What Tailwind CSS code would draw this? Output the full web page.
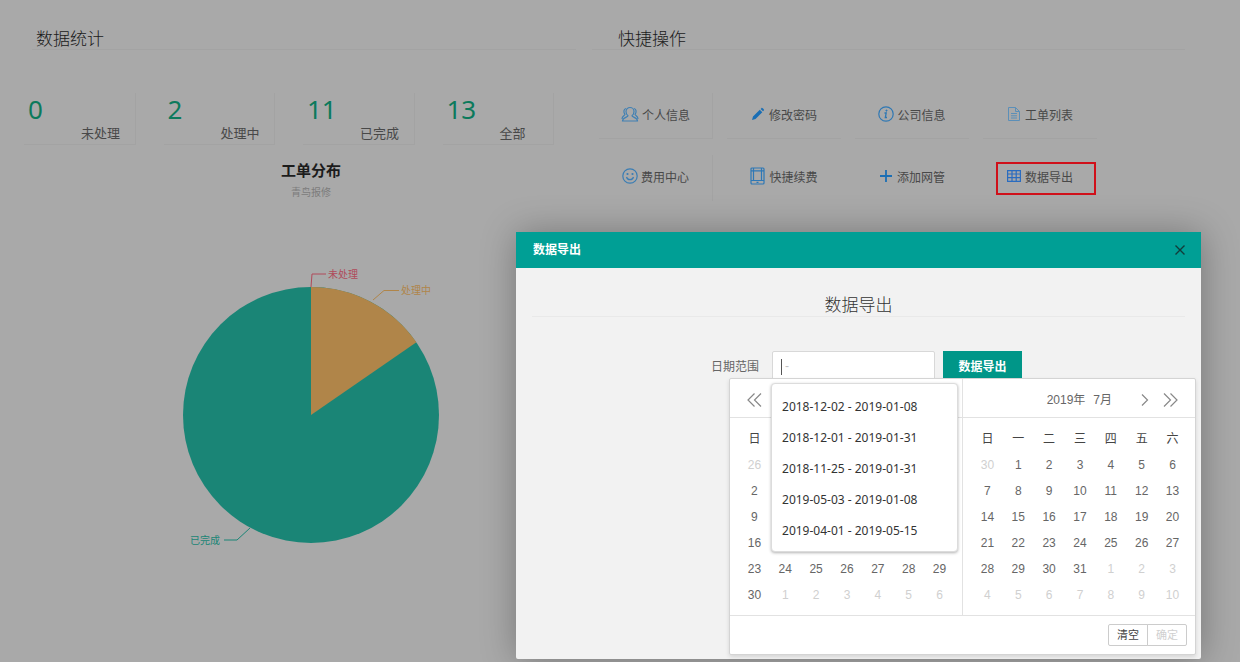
<!DOCTYPE html>
<html lang="zh-CN">
<head>
<meta charset="utf-8">
<meta name="viewport" content="width=device-width, initial-scale=1">
<title>数据导出</title>
<script src="https://cdn.jsdelivr.net/npm/@tailwindcss/browser@4"></script>
</head>
<body class="relative h-screen overflow-hidden bg-[#a9a9a9] font-['Liberation_Sans','Noto_Sans_CJK_SC',sans-serif] text-xs text-[#484848]">

<main class="grid grid-cols-[592fr_648fr]">
  <section>
    <div class="ml-8 mr-4 border-b border-[#a3a3a3] pt-[30px] pl-1">
      <h2 class="text-[17px] leading-[19px] font-light text-[#1a1a1a]">数据统计</h2>
    </div>
    <div class="mt-[43px] mr-[10px] ml-6 grid grid-cols-4">
      <div class="mr-7 h-[52px] border-r border-b border-[#a3a3a3] pl-1">
        <p class="font-['Noto_Sans'] text-[26px] leading-8 text-[#0c7a5c]">0</p>
        <p class="pl-[53px] text-[13px] leading-[18px]">未处理</p>
      </div>
      <div class="mr-7 h-[52px] border-r border-b border-[#a3a3a3] pl-1">
        <p class="font-['Noto_Sans'] text-[26px] leading-8 text-[#0c7a5c]">2</p>
        <p class="pl-[53px] text-[13px] leading-[18px]">处理中</p>
      </div>
      <div class="mr-7 h-[52px] border-r border-b border-[#a3a3a3] pl-1">
        <p class="font-['Noto_Sans'] text-[26px] leading-8 text-[#0c7a5c]">11</p>
        <p class="pl-[53px] text-[13px] leading-[18px]">已完成</p>
      </div>
      <div class="mr-7 h-[52px] border-r border-b border-[#a3a3a3] pl-1">
        <p class="font-['Noto_Sans'] text-[26px] leading-8 text-[#0c7a5c]">13</p>
        <p class="pl-[53px] text-[13px] leading-[18px]">全部</p>
      </div>
    </div>
    <div class="ml-[30px] mt-4 text-center">
      <h3 class="text-[15px] leading-5 font-bold text-[#1c1c1c]">工单分布</h3>
      <p class="mt-1 text-[10px] leading-4 text-[#7c7c7c]">青鸟报修</p>
      <svg class="mx-auto mt-[54px] block" width="282" height="300" viewBox="170 255 282 300" role="img" aria-label="工单分布饼图">
        <circle cx="311" cy="415" r="128" fill="#1a8576"/>
        <path d="M311 415V287A128 128 0 0 1 416.400 342.300Z" fill="#b08549"/>
        <g fill="none" stroke-width="1">
          <path d="M311 287L312 274H326" stroke="#b04a5a"/>
          <path d="M373 300L384 290.500H399" stroke="#b08549"/>
          <path d="M250 528L237 540H224" stroke="#1a8576"/>
        </g>
        <g font-size="10">
          <text x="328" y="278" fill="#b04a5a">未处理</text>
          <text x="401" y="294" fill="#b08549">处理中</text>
          <text x="190" y="544" fill="#1a8576">已完成</text>
        </g>
      </svg>
    </div>
  </section>

  <section>
    <div class="mr-[55px] border-b border-[#a3a3a3] pt-[30px] pl-[26px]">
      <h2 class="text-[17px] leading-[19px] font-light text-[#1a1a1a]">快捷操作</h2>
    </div>
    <nav class="mt-[43px] mr-[136px] grid grid-cols-4 gap-y-4">
      <a href="#" class="mx-[7px] flex h-[46px] items-center justify-center gap-[3px] border-r border-b border-[#a3a3a3]">
        <svg class="mb-1 size-[18px]" viewBox="0 0 18 18" fill="none" stroke="#4080b4" stroke-width="1.200"><path d="M5 6.500a4 4 0 1 1 8 0c0 2-1 3.500-2 4.300 0 1.400 5.500 1.600 5.500 5.200h-15C1.500 12.400 7 12.200 7 10.800 6 10 5 8.500 5 6.500Z"/><path d="M5 3.500C2.500 4 2.300 7.500 4 9.300 4 10.500 1 10.800 1 14M13 3.500c2.500.5 2.700 4 1 5.800 0 1.200 3 1.500 3 4.700"/></svg><span>个人信息</span></a>
      <a href="#" class="mx-[7px] flex h-[46px] items-center justify-center gap-1 border-b border-[#a3a3a3]">
        <svg class="mb-1 size-[14px]" viewBox="0 0 14 14" fill="#1a6eb4"><path d="M1 13l1-3.500 6.800-6.800 2.500 2.500L4.500 12ZM9.600 1.900l1-1c.5-.5 2.900 1.800 2.400 2.400l-1 1Z"/></svg><span>修改密码</span></a>
      <a href="#" class="mx-[7px] flex h-[46px] items-center justify-center gap-[3px] border-b border-[#a3a3a3]">
        <svg class="mb-1 size-4" viewBox="0 0 16 16" fill="none" stroke="#2f78b4"><circle cx="8" cy="8" r="7.200" stroke-width="1.200"/><path d="M6.500 7h1.700l-.9 4.500h1.700" stroke-width="1.300"/><circle cx="8.500" cy="4.600" r=".6" fill="#2f78b4"/></svg><span>公司信息</span></a>
      <a href="#" class="mx-[7px] flex h-[46px] items-center justify-center gap-1 border-b border-[#a3a3a3]">
        <svg class="mb-1 size-[14px]" viewBox="0 0 14 14" fill="none" stroke="#5b8fb8"><path d="M1.500.5h7l4 4v9h-11ZM8.500.5v4h4M4 6.500h6M4 8.800h6M4 11h6"/></svg><span>工单列表</span></a>
      <a href="#" class="mx-[7px] flex h-[46px] items-center justify-center gap-[3px] border-r border-[#a3a3a3]">
        <svg class="mb-1 size-4" viewBox="0 0 16 16" fill="none" stroke="#3a7db4" stroke-width="1.200"><circle cx="8" cy="8" r="7.200"/><path d="M4.500 9c.8 3.500 6.200 3.500 7 0"/><circle cx="5.500" cy="6" r=".5"/><circle cx="10.500" cy="6" r=".5"/></svg><span>费用中心</span></a>
      <a href="#" class="mx-[7px] flex h-[46px] items-center justify-center gap-1">
        <svg class="mb-1 h-[18px] w-[15px]" viewBox="0 0 15 18" fill="none" stroke="#2e78b6" stroke-width="1.200"><rect x="1" y="1" width="13" height="16" rx="1"/><path d="M1 3.800h13M1 13.500h13M3.500 1v12.500M11.500 1v12.500M6.500 15.300h2"/></svg><span>快捷续费</span></a>
      <a href="#" class="mx-[7px] flex h-[46px] items-center justify-center gap-1">
        <svg class="mb-1 size-[14px]" viewBox="0 0 14 14" stroke="#1a6eb4" stroke-width="1.800"><path d="M7 1v12M1 7h12"/></svg><span>添加网管</span></a>
      <a href="#" class="mr-2 ml-5 flex h-[33px] items-center gap-1 self-center border-2 border-[#d0101a] pl-[9px]">
        <svg class="mb-1 h-3 w-[14px]" viewBox="0 0 14 12" fill="none" stroke="#2a6cc0" stroke-width="1.200"><path d="M.6.6h12.800v10.800H.6ZM.6 4h12.800M.6 7.700h12.800M5 .6v10.800M9.200.6v10.800"/></svg><span>数据导出</span></a>
    </nav>
  </section>
</main>

<div class="absolute inset-0 pt-[232px] pr-[39px] pl-[516px]">
  <div role="dialog" aria-labelledby="dlg-title" class="h-[427px] rounded-xs bg-[#f2f2f2] shadow-[1px_1px_36px_rgba(0,0,0,0.3)]">
    <header class="flex h-9 items-center justify-between bg-[#009f95] pr-[15px] pl-[17px]">
      <h2 id="dlg-title" class="font-bold text-white">数据导出</h2>
      <button type="button" aria-label="关闭" class="size-3"><svg class="size-3" viewBox="0 0 12 12" stroke="#123c3a" stroke-width="1.400"><path d="M1.500 1.500l9 9M10.500 1.500l-9 9"/></svg></button>
    </header>
    <div class="mx-4 border-b border-[#e9e9e9] pt-7 text-center">
      <h3 class="text-[17px] leading-5 font-light text-[#333]">数据导出</h3>
    </div>
    <form class="mt-[34px] flex items-center pl-[195px]">
      <label for="range" class="mr-[13px] pt-0.5 text-[#666]">日期范围</label>
      <div class="relative mr-2 w-[163px]">
        <input id="range" type="text" placeholder="-" class="block h-[30px] w-full rounded-xs border border-[#d8d8d8] bg-white px-3 text-xs text-[#444] placeholder:text-[#c4c4c4]">
        <i class="absolute top-2 left-[9px] h-4 w-px bg-[#555]"></i>

        <div class="absolute top-[27px] -left-[43px] w-[467px] rounded-xs border border-[#d4d4d4] bg-white text-[#666] shadow-[0_2px_4px_rgba(0,0,0,0.12)]">
          <div class="flex">
            <div class="flex-1 border-r border-[#e2e2e2]">
              <div class="flex h-[39px] items-center border-b border-[#e2e2e2] pt-1 pl-[17px]">
                <button type="button" aria-label="上一年"><svg class="h-4 w-[15px]" viewBox="0 0 15 16" fill="none" stroke="#888" stroke-width="1.200"><path d="M7.500 1.500L1 8l6.500 6.500M14 1.500L7.500 8l6.500 6.500"/></svg></button>
              </div>
              <div class="pt-2 pr-[7px] pb-[7px] pl-[9px]">
                <table class="w-full table-fixed text-center [&_tr]:h-[26px]">
                  <thead><tr class="text-[#444] [&_th]:font-normal"><th>日</th><th></th><th></th><th></th><th></th><th></th><th></th></tr></thead>
                  <tbody>
                    <tr><td class="text-[#d0d0d0]">26</td><td></td><td></td><td></td><td></td><td></td><td></td></tr>
                    <tr><td>2</td><td></td><td></td><td></td><td></td><td></td><td></td></tr>
                    <tr><td>9</td><td></td><td></td><td></td><td></td><td></td><td></td></tr>
                    <tr><td>16</td><td></td><td></td><td></td><td></td><td></td><td></td></tr>
                    <tr><td>23</td><td>24</td><td>25</td><td>26</td><td>27</td><td>28</td><td>29</td></tr>
                    <tr class="text-[#d0d0d0]"><td class="text-[#666]">30</td><td>1</td><td>2</td><td>3</td><td>4</td><td>5</td><td>6</td></tr>
                  </tbody>
                </table>
              </div>
            </div>
            <div class="flex-1">
              <div class="flex h-[39px] items-center justify-end border-b border-[#e2e2e2] pt-1 pr-[17px]">
                <span class="mr-2">2019年</span><span class="mr-[29px]">7月</span>
                <button type="button" aria-label="下一月" class="mr-[14px]"><svg class="h-[14px] w-2" viewBox="0 0 8 14" fill="none" stroke="#888" stroke-width="1.200"><path d="M1 1.500L6.500 7 1 12.500"/></svg></button>
                <button type="button" aria-label="下一年"><svg class="h-4 w-[15px]" viewBox="0 0 15 16" fill="none" stroke="#888" stroke-width="1.200"><path d="M1 1.500L7.500 8 1 14.500M7.500 1.500L14 8l-6.500 6.500"/></svg></button>
              </div>
              <div class="pt-2 pr-[7px] pb-[7px] pl-[9px]">
                <table class="w-full table-fixed text-center [&_tr]:h-[26px]">
                  <thead><tr class="text-[#444] [&_th]:font-normal"><th>日</th><th>一</th><th>二</th><th>三</th><th>四</th><th>五</th><th>六</th></tr></thead>
                  <tbody>
                    <tr><td class="text-[#d0d0d0]">30</td><td>1</td><td>2</td><td>3</td><td>4</td><td>5</td><td>6</td></tr>
                    <tr><td>7</td><td>8</td><td>9</td><td>10</td><td>11</td><td>12</td><td>13</td></tr>
                    <tr><td>14</td><td>15</td><td>16</td><td>17</td><td>18</td><td>19</td><td>20</td></tr>
                    <tr><td>21</td><td>22</td><td>23</td><td>24</td><td>25</td><td>26</td><td>27</td></tr>
                    <tr><td>28</td><td>29</td><td>30</td><td>31</td><td class="text-[#d0d0d0]">1</td><td class="text-[#d0d0d0]">2</td><td class="text-[#d0d0d0]">3</td></tr>
                    <tr class="text-[#d0d0d0]"><td>4</td><td>5</td><td>6</td><td>7</td><td>8</td><td>9</td><td>10</td></tr>
                  </tbody>
                </table>
              </div>
            </div>
          </div>
          <div class="flex h-[39px] items-center justify-end border-t border-[#e2e2e2] pr-2 text-[11px]">
            <button type="button" class="h-[22px] w-10 rounded-l-xs border border-[#ccc] text-[#444]">清空</button>
            <button type="button" disabled class="-ml-px h-[22px] w-10 rounded-r-xs border border-[#ccc] text-[#d0d0d0]">确定</button>
          </div>
        </div>

        <ul class="absolute top-8 -left-px w-[187px] rounded-sm border border-[#dcdcdc] bg-white pt-[7px] pb-[5px] pl-[10px] font-['Noto_Sans'] leading-[31px] text-[#333] shadow-[0_1px_3px_rgba(0,0,0,0.3)]">
          <li>2018-12-02 - 2019-01-08</li>
          <li>2018-12-01 - 2019-01-31</li>
          <li>2018-11-25 - 2019-01-31</li>
          <li>2019-05-03 - 2019-01-08</li>
          <li>2019-04-01 - 2019-05-15</li>
        </ul>
      </div>
      <button type="button" class="h-[30px] w-[79px] bg-[#009688] pt-0.5 font-bold text-white">数据导出</button>
    </form>
  </div>
</div>
</body>
</html>
